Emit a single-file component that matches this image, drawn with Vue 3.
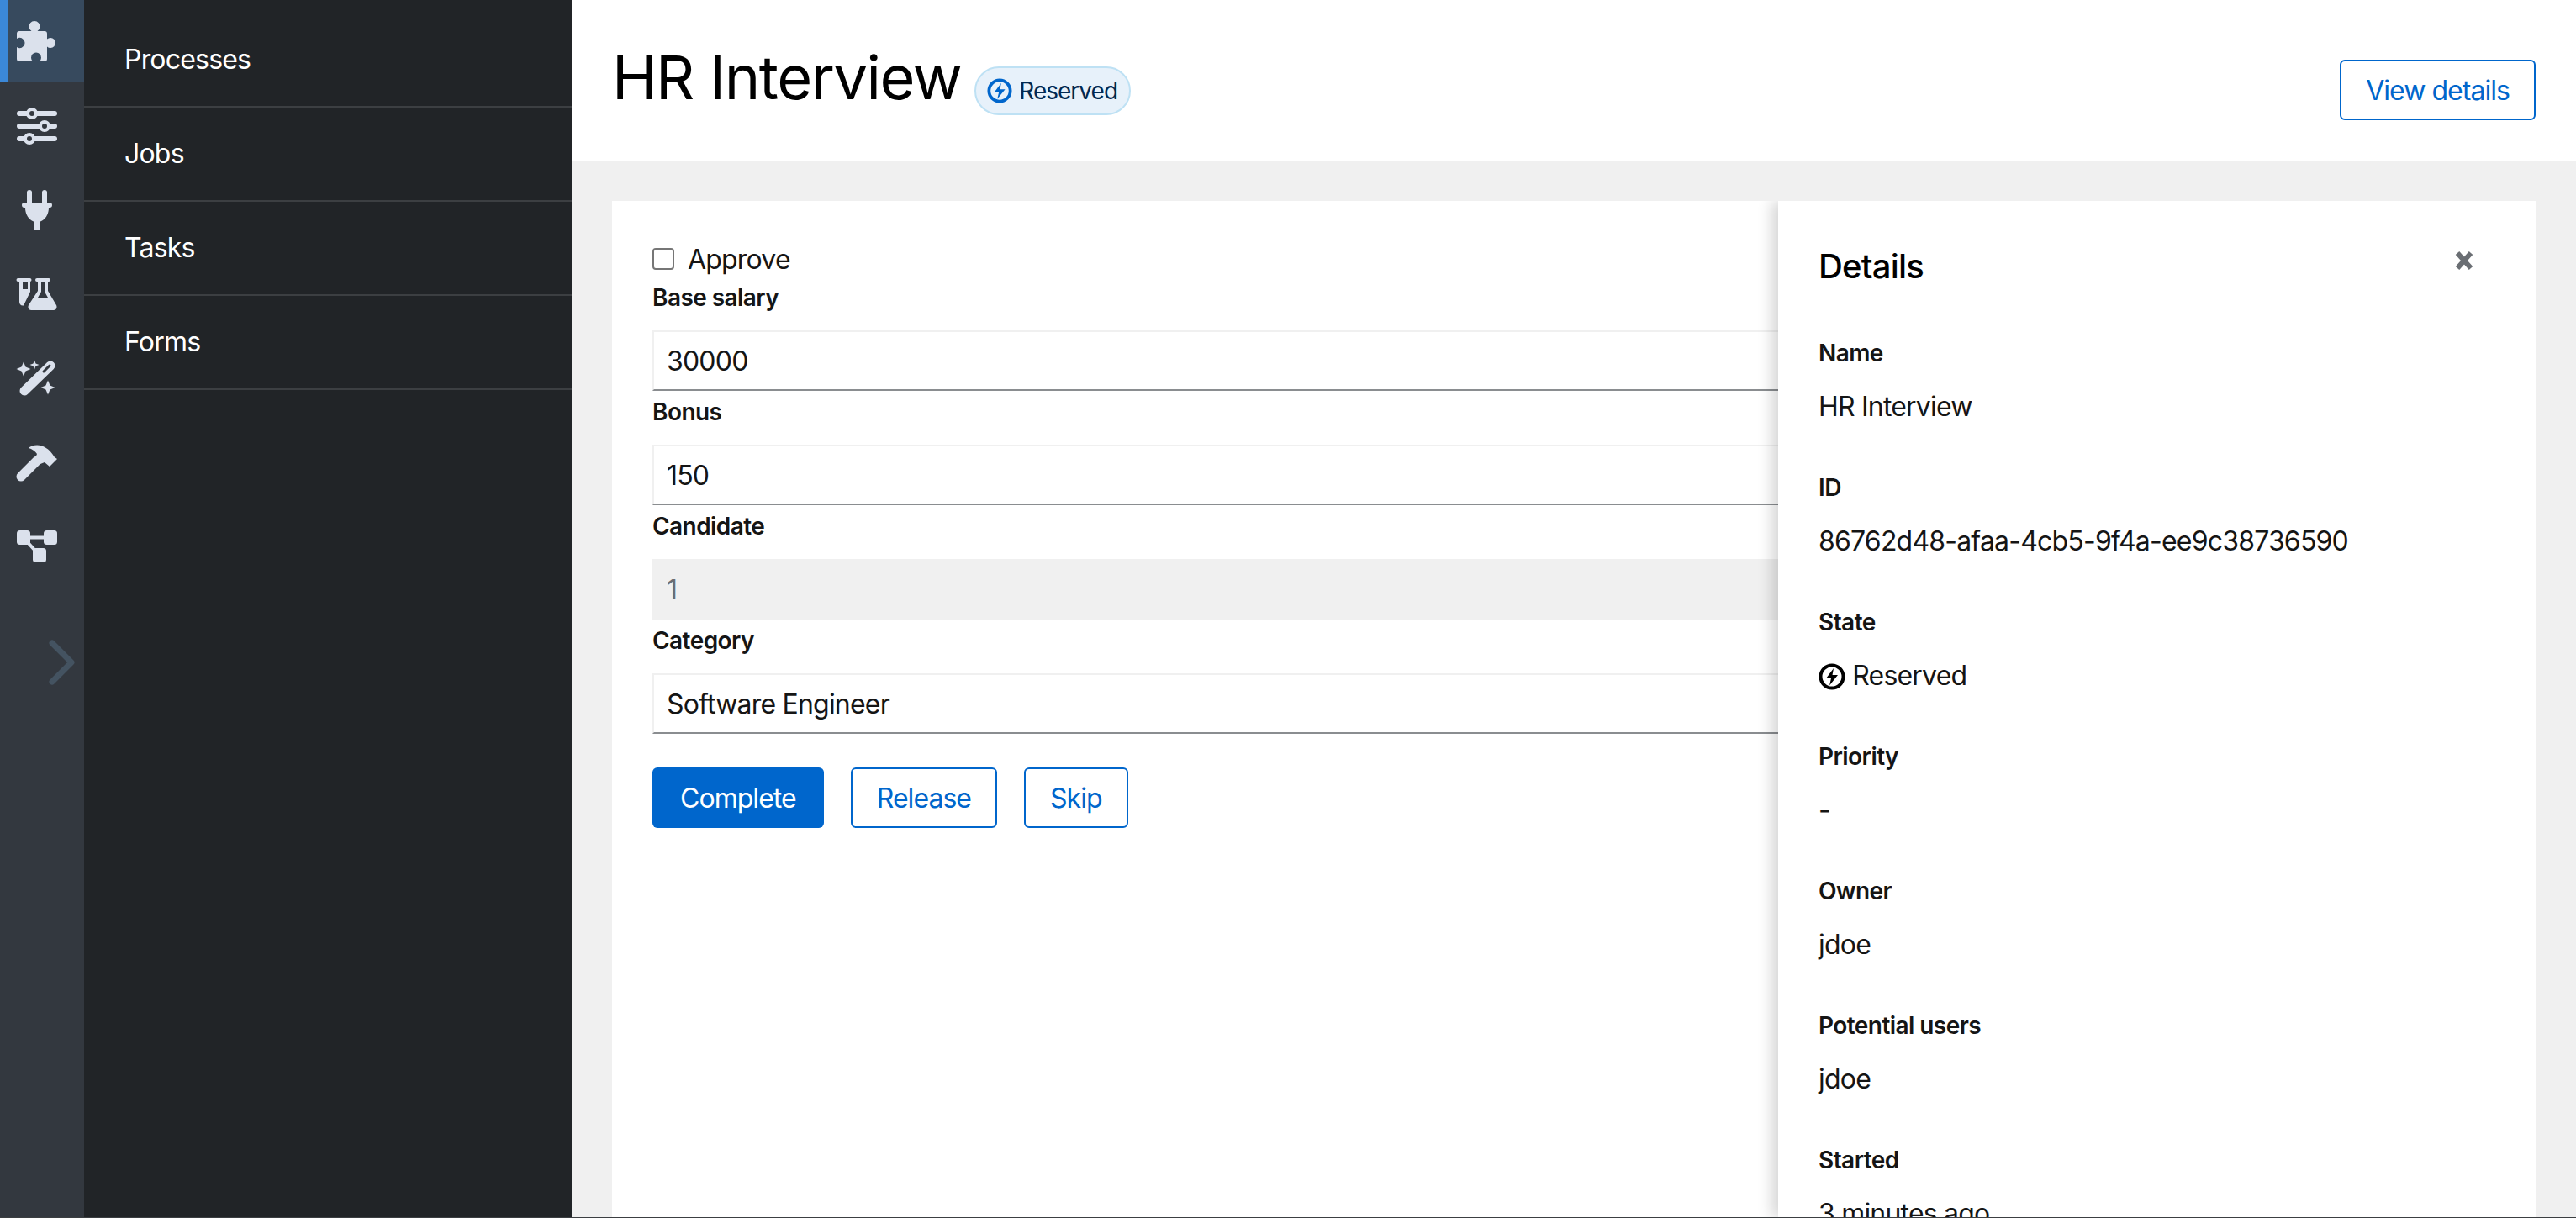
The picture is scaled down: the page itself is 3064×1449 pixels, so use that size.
<script setup>
const navLinks = ['Processes', 'Jobs', 'Tasks', 'Forms']

const details = [
  { label: 'Name', value: 'HR Interview' },
  { label: 'ID', value: '86762d48-afaa-4cb5-9f4a-ee9c38736590' },
  { label: 'State', value: 'Reserved', icon: true },
  { label: 'Priority', value: '-' },
  { label: 'Owner', value: 'jdoe' },
  { label: 'Potential users', value: 'jdoe' },
  { label: 'Started', value: '3 minutes ago' }
]

const fields = [
  { label: 'Base salary', value: '30000' },
  { label: 'Bonus', value: '150' },
  { label: 'Candidate', value: '1', disabled: true },
  { label: 'Category', value: 'Software Engineer' }
]
</script>

<template>
  <div class="page">
    <aside class="rail">
      <div class="rail-item active">
        <svg viewBox="0 0 48 48" class="rail-icon">
          <path d="M3 12h14.500a6.500 6.500 0 1 1 7 0H33a3 3 0 0 1 3 3v6.500a6 6 0 1 1 0 9V45a3 3 0 0 1-3 3h-6a6 6 0 1 0-8 0H3a3 3 0 0 1-3-3V31a6 6 0 1 0 0-10V15a3 3 0 0 1 3-3z" />
        </svg>
      </div>
      <div class="rail-item">
        <svg viewBox="0 0 48 48" class="rail-icon">
          <rect x="0" y="6" width="48" height="6" rx="3" />
          <rect x="0" y="21" width="48" height="6" rx="3" />
          <rect x="0" y="36" width="48" height="6" rx="3" />
          <circle cx="18" cy="9" r="5" class="knob" />
          <circle cx="33" cy="24" r="5" class="knob" />
          <circle cx="15" cy="39" r="5" class="knob" />
        </svg>
      </div>
      <div class="rail-item">
        <svg viewBox="0 0 48 48" class="rail-icon">
          <path d="M12 3a3 3 0 0 1 6 0v13h-6zM30 3a3 3 0 0 1 6 0v13h-6zM9 15h30a3 3 0 0 1 0 6h-1c0 9-5 15-11 17v10h-6V38c-6-2-11-8-11-17H9a3 3 0 0 1 0-6z" />
        </svg>
      </div>
      <div class="rail-item">
        <svg viewBox="0 0 48 48" class="rail-icon">
          <path fill-rule="evenodd" d="M1.500 5h14a2 2 0 0 1 0 4H16v12L8 37.500C5 38 3 36 3 33V9H1.500a2 2 0 0 1 0-4zM7 9v9h6V9z" />
          <path fill-rule="evenodd" d="M24 5h14a2 2 0 0 1 0 4h-1v11l10 17c1.500 3-.500 6-3 6H17c-2.500 0-4.500-3-3-6l11-17V9h-1a2 2 0 0 1 0-4zM29 9v12l-4 7h12l-4-7V9z" />
        </svg>
      </div>
      <div class="rail-item">
        <svg viewBox="0 0 48 48" class="rail-icon">
          <path d="M9 39L40 9" class="wand" />
          <path d="M32 16l7-7" class="wand-slot" />
          <path d="M8 4.500l2.500 6L16.500 13l-6 2.500L8 21.500l-2.500-6L-.500 13l6-2.500z" />
          <path d="M21 2.500l1.500 4L26.500 8l-4 1.500-1.500 4-1.500-4-4-1.500 4-1.500z" />
          <path d="M37 26.500l2.500 6 6 2.500-6 2.500-2.500 6-2.500-6-6-2.500 6-2.500z" />
        </svg>
      </div>
      <div class="rail-item">
        <svg viewBox="0 0 48 48" class="rail-icon">
          <path d="M5 41L24 22" class="hammer" />
          <path d="M14 7C20 2 34 0 45 18l3 2-9 9-6-5-5 2-6-7 2-5c-2-3-6-6-10-7z" />
        </svg>
      </div>
      <div class="rail-item">
        <svg viewBox="0 0 48 48" class="rail-icon">
          <rect x="0" y="5" width="16" height="17" rx="3.500" />
          <rect x="32" y="5" width="16" height="17" rx="3.500" />
          <rect x="19" y="26" width="16" height="17" rx="3.500" />
          <path d="M12 11.500h24v4H12zM11 20l3-2.500 10 11-3 2.500z" />
        </svg>
      </div>
      <svg viewBox="0 0 36 58" class="chevron">
        <path d="M6 6l23 23L6 52" />
      </svg>
    </aside>

    <nav class="sidebar">
      <a v-for="link in navLinks" :key="link" class="nav-link">{{ link }}</a>
    </nav>

    <div class="main">
      <header class="header">
        <h1 class="title">HR Interview</h1>
        <span class="badge">
          <svg viewBox="0 0 32 32" class="bolt-icon">
            <circle cx="16" cy="16" r="13.500" class="ring" />
            <path d="M18 6L9 18h6l-2 8.500L23 14h-6.500z" class="bolt" />
          </svg>
          Reserved
        </span>
        <button class="btn btn-outline view-btn">View details</button>
      </header>

      <section class="content">
        <div class="card">
          <form class="task-form" @submit.prevent>
            <label class="check-row">
              <input type="checkbox" class="check" />
              <span>Approve</span>
            </label>
            <div v-for="field in fields" :key="field.label" class="field">
              <label class="field-label">{{ field.label }}</label>
              <input type="text" class="field-input" :value="field.value" :disabled="field.disabled" />
            </div>
            <div class="actions">
              <button class="btn btn-primary">Complete</button>
              <button class="btn btn-outline">Release</button>
              <button class="btn btn-outline">Skip</button>
            </div>
          </form>

          <aside class="panel">
            <div class="panel-head">
              <h2 class="panel-title">Details</h2>
              <svg viewBox="0 0 24 24" class="close-icon">
                <path d="M4 3l16 18M20 3L4 21" />
              </svg>
            </div>
            <dl class="detail-list">
              <div v-for="item in details" :key="item.label" class="detail">
                <dt>{{ item.label }}</dt>
                <dd>
                  <svg v-if="item.icon" viewBox="0 0 32 32" class="state-icon">
                    <circle cx="16" cy="16" r="13.500" class="ring" />
                    <path d="M18 6L9 18h6l-2 8.500L23 14h-6.500z" class="bolt" />
                  </svg>
                  {{ item.value }}
                </dd>
              </div>
            </dl>
          </aside>
        </div>
      </section>
    </div>
  </div>
</template>

<style>
html, body {
  margin: 0;
  overflow: hidden;
}
</style>

<style scoped>
.page {
  display: flex;
  width: 3064px;
  height: 1449px;
  box-sizing: border-box;
  overflow: hidden;
  border-bottom: 1px solid #3c3f42;
  font-family: Inter, "Liberation Sans", sans-serif;
  font-size: 32px;
  letter-spacing: -0.025em;
  color: #151515;
}

.rail {
  width: 100px;
  flex: none;
  background: #33383f;
}

.rail-item {
  height: 100px;
  display: flex;
  align-items: center;
  justify-content: center;
  box-sizing: border-box;
  padding-right: 12px;
}

.rail-item.active {
  height: 98px;
  margin-bottom: 2px;
  background: #374a5e;
  border-left: 10px solid #3b88d8;
  padding-right: 22px;
}

.rail-icon {
  width: 48px;
  height: 48px;
  overflow: visible;
  fill: #dbe1ec;
}

.knob {
  stroke: #dbe1ec;
  stroke-width: 4;
  fill: #33383f;
}

.wand {
  stroke: #dbe1ec;
  stroke-width: 11;
  stroke-linecap: round;
  fill: none;
}

.wand-slot {
  stroke: #33383f;
  stroke-width: 3;
  stroke-linecap: round;
  fill: none;
}

.hammer {
  stroke: #dbe1ec;
  stroke-width: 11;
  stroke-linecap: round;
  fill: none;
}

.chevron {
  display: block;
  width: 36px;
  height: 58px;
  margin: 59px 0 0 56px;
  fill: none;
  stroke: #445361;
  stroke-width: 7;
  stroke-linecap: round;
  stroke-linejoin: round;
}

.sidebar {
  width: 580px;
  flex: none;
  background: #212427;
  padding-top: 16px;
  box-sizing: border-box;
}

.nav-link {
  display: flex;
  align-items: center;
  height: 112px;
  box-sizing: border-box;
  padding: 0 0 2px 48px;
  border-bottom: 2px solid #3c3f42;
  color: #fff;
}

.main {
  flex: 1;
  min-width: 0;
  display: flex;
  flex-direction: column;
  background: #f0f0f0;
}

.header {
  height: 191px;
  flex: none;
  box-sizing: border-box;
  display: flex;
  align-items: flex-start;
  background: #fff;
  padding: 0 48px;
}

.title {
  margin: 44px 0 0;
  font-size: 72px;
  font-weight: 400;
  letter-spacing: -0.02em;
  line-height: 96px;
  color: #000;
}

.badge {
  margin: 79px 0 0 16px;
  height: 58px;
  box-sizing: border-box;
  display: inline-flex;
  align-items: center;
  gap: 8px;
  padding: 0 14px 0 13px;
  background: #e7f1fa;
  border: 2px solid #bee1f4;
  border-radius: 30px;
  font-size: 28px;
  letter-spacing: -0.035em;
  color: #002952;
}

.bolt-icon {
  width: 30px;
  height: 30px;
  color: #06c;
}

.state-icon {
  width: 32px;
  height: 32px;
  color: #000;
  vertical-align: -6px;
}

.ring {
  fill: none;
  stroke: currentColor;
  stroke-width: 4;
}

.bolt {
  fill: currentColor;
}

.btn {
  height: 72px;
  box-sizing: border-box;
  padding: 0 33px;
  border-radius: 6px;
  font: inherit;
  font-size: 32px;
  letter-spacing: -0.03em;
}

.btn-primary {
  background: #06c;
  border: none;
  color: #fff;
}

.btn-outline {
  background: #fff;
  border: 2px solid #06c;
  color: #06c;
  padding: 0 29px;
}

.view-btn {
  margin: 71px 0 0 auto;
}

.content {
  flex: 1;
  min-height: 0;
  padding: 48px 48px 0;
}

.card {
  position: relative;
  height: 100%;
  background: #fff;
  overflow: hidden;
}

.task-form {
  padding: 48px;
}

.check-row {
  display: flex;
  align-items: center;
  gap: 16px;
  height: 42px;
}

.check {
  appearance: none;
  width: 26px;
  height: 26px;
  margin: 0;
  border: 2px solid #767676;
  border-radius: 4px;
  background: #fff;
}

.field {
  display: flex;
  flex-direction: column;
}

.field-label {
  font-size: 28px;
  font-weight: 600;
  letter-spacing: -0.02em;
  line-height: 50px;
  margin-bottom: 14px;
  color: #151515;
}

.field-input {
  height: 72px;
  box-sizing: border-box;
  padding: 0 15px;
  font: inherit;
  letter-spacing: -0.025em;
  color: #151515;
  background: #fff;
  border: 2px solid #f0f0f0;
  border-bottom-color: #8a8d90;
  border-radius: 0;
  outline: none;
}

.field-input:disabled {
  background: #f0f0f0;
  border-color: #f0f0f0;
  color: #6a6e73;
}

.actions {
  display: flex;
  gap: 32px;
  margin-top: 40px;
}

.panel {
  position: absolute;
  top: 0;
  right: 0;
  bottom: 0;
  width: 901px;
  box-sizing: border-box;
  padding: 0 48px;
  background: #fff;
  box-shadow: -8px 0 16px rgba(3, 3, 3, 0.16);
}

.panel-head {
  display: flex;
  justify-content: space-between;
  padding-top: 54px;
  height: 160px;
  box-sizing: border-box;
}

.panel-title {
  margin: 0;
  font-size: 40px;
  font-weight: 500;
  letter-spacing: -0.02em;
  line-height: 48px;
  color: #000;
}

.close-icon {
  width: 24px;
  height: 24px;
  margin: 5px 25px 0 0;
  fill: none;
  stroke: #6a6e73;
  stroke-width: 6;
}

.detail-list {
  margin: 0;
}

.detail {
  height: 160px;
}

.detail dt {
  font-size: 28px;
  font-weight: 600;
  letter-spacing: -0.02em;
  line-height: 42px;
  margin-bottom: 19px;
  color: #151515;
}

.detail dd {
  margin: 0;
  line-height: 48px;
  color: #151515;
}
</style>
